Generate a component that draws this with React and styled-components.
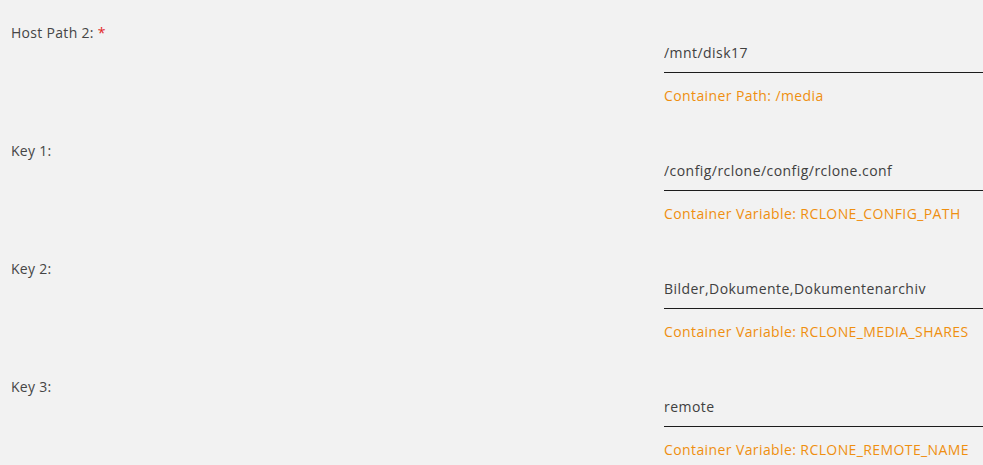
import React from "react";
import styled, { createGlobalStyle } from "styled-components";

const GlobalStyle = createGlobalStyle`
  html, body {
    margin: 0;
    padding: 0;
    background: #f2f2f2;
    overflow: hidden;
  }
  body {
    font-family: "Open Sans", "Liberation Sans", sans-serif;
    font-size: 14px;
    color: #444;
  }
`;

const Form = styled.form`
  padding: 23px 0 0 11px;
  display: flex;
  flex-direction: column;
  gap: 35px;
`;

const Row = styled.div`
  display: flex;
  flex-direction: row;
  align-items: flex-start;
`;

const Label = styled.label`
  width: 653px;
  flex: none;
  line-height: 20px;
  font-size: 14px;
  letter-spacing: 0.3px;
  color: #454545;

  &::after {
    content: ${props => (props.required ? '" *"' : "none")};
    color: #e22828;
  }
`;

const Field = styled.div`
  flex: 1;
  display: flex;
  flex-direction: column;
  padding-top: 10px;
`;

const Input = styled.input`
  box-sizing: border-box;
  width: 100%;
  height: 40px;
  margin: 0;
  padding: 0;
  border: none;
  border-bottom: 1px solid #1c1c1c;
  background: transparent;
  font-family: inherit;
  font-size: 14px;
  letter-spacing: 0.45px;
  color: #404040;
  outline: none;
`;

const Hint = styled.span`
  margin-top: 13px;
  line-height: 20px;
  font-size: 14px;
  letter-spacing: 0.4px;
  color: #ef8f10;
`;

const rows = [
  { label: "Host Path 2:", required: true, value: "/mnt/disk17", hint: "Container Path: /media" },
  { label: "Key 1:", value: "/config/rclone/config/rclone.conf", hint: "Container Variable: RCLONE_CONFIG_PATH" },
  { label: "Key 2:", value: "Bilder,Dokumente,Dokumentenarchiv", hint: "Container Variable: RCLONE_MEDIA_SHARES" },
  { label: "Key 3:", value: "remote", hint: "Container Variable: RCLONE_REMOTE_NAME" },
];

export default function App() {
  return (
    <>
      <GlobalStyle />
      <Form onSubmit={e => e.preventDefault()}>
        {rows.map(row => (
          <Row key={row.label}>
            <Label required={row.required}>{row.label}</Label>
            <Field>
              <Input type="text" defaultValue={row.value} />
              <Hint>{row.hint}</Hint>
            </Field>
          </Row>
        ))}
      </Form>
    </>
  );
}
